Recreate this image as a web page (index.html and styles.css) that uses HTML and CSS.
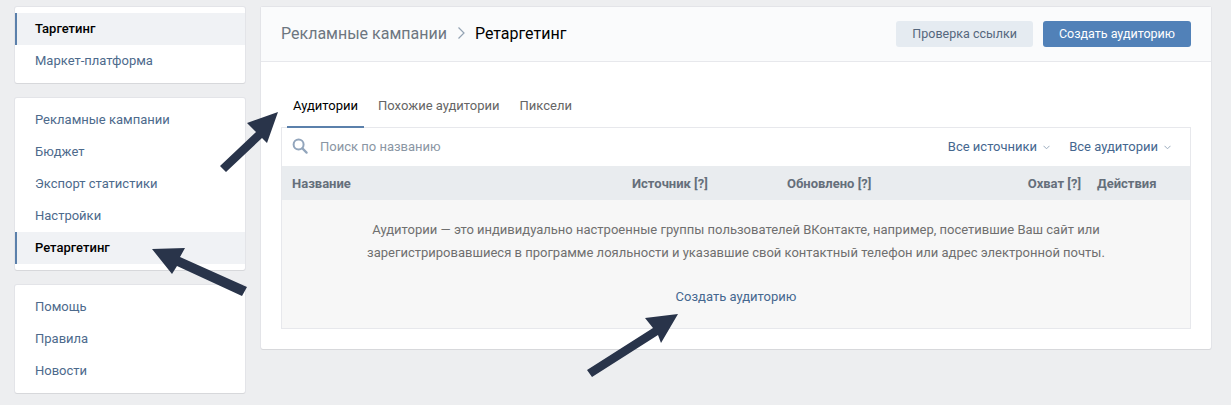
FILE: index.html
```html
<!DOCTYPE html>
<html lang="ru">
<head>
    <meta charset="UTF-8">
    <title>Ретаргетинг</title>
    <link rel="stylesheet" href="styles.css">
</head>
<body>
    <div class="page">
        <div class="sidebar">
            <div class="menu">
                <a class="menu-item active">Таргетинг</a>
                <a class="menu-item">Маркет-платформа</a>
            </div>
            <div class="menu">
                <a class="menu-item">Рекламные кампании</a>
                <a class="menu-item">Бюджет</a>
                <a class="menu-item">Экспорт статистики</a>
                <a class="menu-item">Настройки</a>
                <a class="menu-item active">Ретаргетинг</a>
            </div>
            <div class="menu">
                <a class="menu-item">Помощь</a>
                <a class="menu-item">Правила</a>
                <a class="menu-item">Новости</a>
            </div>
        </div>

        <div class="main">
            <div class="main-header">
                <div class="crumbs">
                    <span class="crumb">Рекламные кампании</span>
                    <svg class="crumb-sep" width="9" height="14" viewBox="0 0 9 14"><path d="M1.5 1.5 7 7l-5.5 5.5" fill="none" stroke="#93a3b3" stroke-width="1.2"/></svg>
                    <span class="crumb current">Ретаргетинг</span>
                </div>
                <div class="actions">
                    <button class="btn btn-light">Проверка ссылки</button>
                    <button class="btn btn-primary">Создать аудиторию</button>
                </div>
            </div>

            <div class="content">
                <div class="tabs">
                    <a class="tab selected">Аудитории</a>
                    <a class="tab">Похожие аудитории</a>
                    <a class="tab">Пиксели</a>
                </div>

                <div class="panel">
                    <div class="search-row">
                        <svg class="search-icon" width="16" height="16" viewBox="0 0 16 16"><circle cx="6.6" cy="6.6" r="5" fill="none" stroke="#92a5bc" stroke-width="2"/><path d="m10.4 10.4 4.2 4.2" stroke="#92a5bc" stroke-width="2.2" stroke-linecap="round"/></svg>
                        <span class="search-text">Поиск по названию</span>
                        <span class="filter">Все источники<svg width="7" height="5" viewBox="0 0 7 5"><path d="m.5.8 3 3 3-3" fill="none" stroke="#9aabbd"/></svg></span>
                        <span class="filter">Все аудитории<svg width="7" height="5" viewBox="0 0 7 5"><path d="m.5.8 3 3 3-3" fill="none" stroke="#9aabbd"/></svg></span>
                    </div>
                    <div class="table-head">
                        <span>Название</span>
                        <span>Источник [?]</span>
                        <span>Обновлено [?]</span>
                        <span class="right">Охват [?]</span>
                        <span>Действия</span>
                    </div>
                    <div class="empty">
                        <p>Аудитории — это индивидуально настроенные группы пользователей ВКонтакте, например, посетившие Ваш сайт или<br>зарегистрировавшиеся в программе лояльности и указавшие свой контактный телефон или адрес электронной почты.</p>
                        <a class="empty-link">Создать аудиторию</a>
                    </div>
                </div>
            </div>
        </div>
    </div>

    <!-- arrows drawn on top of the screenshot -->
    <svg class="arrows" width="1231" height="405" viewBox="0 0 1231 405">
        <polygon points="278,112 247,123 256,132 220,166 226,172 262,138 267,143" />
        <polygon points="152,249 185,248 180,257 247,287 242,296 177,266 172,274" />
        <polygon points="678,314 645,318 653,328 587,370 592,377 658,335 661,343" />
    </svg>
</body>
</html>
```

FILE: styles.css
```css
* {
    box-sizing: border-box;
}

body {
    margin: 0;
    background: #edeef0;
    font-family: Roboto, "Open Sans", sans-serif;
    font-size: 13px;
    color: #2a5885;
    height: 405px;
    overflow: hidden;
    position: relative;
}

.page {
    display: flex;
    align-items: flex-start;
    gap: 16px;
    padding: 7px 20px 0 15px;
}

/* left menu */
.sidebar {
    width: 230px;
    flex-shrink: 0;
    display: flex;
    flex-direction: column;
    gap: 15px;
}

.menu {
    background: #fff;
    border-radius: 2px;
    padding: 6px 0 6px;
    box-shadow: 0 1px 0 0 #d7d8db, 0 0 0 1px #e3e4e8;
}

.menu-item {
    display: block;
    height: 32px;
    line-height: 32px;
    padding-left: 20px;
    color: #4d6a8c;
}

.menu-item.active {
    padding-left: 18px;
    border-left: 2px solid #5b80ab;
    background: #f0f2f5;
    color: #000;
    font-weight: 500;
}

/* main card */
.main {
    width: 950px;
    height: 342px;
    background: #fff;
    border-radius: 2px;
    box-shadow: 0 1px 0 0 #d7d8db, 0 0 0 1px #e3e4e8;
}

.main-header {
    height: 55px;
    padding: 0 20px;
    background: #fafbfc;
    border-bottom: 1px solid #e7e8ec;
    display: flex;
    align-items: center;
    justify-content: space-between;
}

.crumbs {
    display: flex;
    align-items: center;
    padding-bottom: 2px;
}

.crumb {
    font-size: 16px;
    color: #6d7680;
}

.crumb.current {
    color: #000;
}

.crumb-sep {
    margin: 0 9px 0 10px;
}

.actions {
    display: flex;
    gap: 10px;
}

.btn {
    height: 26px;
    padding: 0 16px 1px;
    border: 0;
    border-radius: 3px;
    font-family: inherit;
    font-size: 12.5px;
}

.btn-light {
    background: #e5ebf1;
    color: #55677d;
}

.btn-primary {
    background: #5181b8;
    color: #fff;
}

.content {
    padding: 0 20px;
}

.tabs {
    display: flex;
    height: 66px;
    padding-left: 6px;
    align-items: flex-end;
}

.tab {
    height: 44px;
    padding: 0 6px;
    line-height: 44px;
    color: #656565;
    margin-right: 8px;
}

.tab.selected {
    color: #000;
    border-bottom: 2px solid #5b80ab;
    position: relative;
    z-index: 1;
}

.panel {
    height: 202px;
    margin-top: -1px;
    border: 1px solid #e7e8ec;
    display: flex;
    flex-direction: column;
}

.search-row {
    height: 38px;
    display: flex;
    align-items: center;
    padding: 0 19px 2px 10px;
    flex-shrink: 0;
}

.search-icon {
    margin-right: 12px;
}

.search-text {
    color: #8a96a3;
    flex: 1;
}

.filter {
    color: #45678f;
    margin-left: 19px;
}

.filter svg {
    margin-left: 6px;
    vertical-align: 1px;
}

.table-head {
    height: 34px;
    flex-shrink: 0;
    background: #e9ecef;
    padding: 0 33px 0 10px;
    display: grid;
    grid-template-columns: 340px 155px auto 1fr 60px;
    align-items: center;
    color: #656f7b;
    font-weight: 700;
}

.table-head .right {
    text-align: right;
    padding-right: 16px;
}

.empty {
    flex: 1;
    background: #f7f7f7;
    text-align: center;
    padding-top: 19px;
}

.empty p {
    margin: 0;
    line-height: 22.5px;
    color: #6f6f6f;
}

.empty-link {
    display: block;
    margin-top: 25px;
    line-height: 16px;
    color: #45678f;
}

.arrows {
    position: absolute;
    left: 0;
    top: 0;
    pointer-events: none;
    fill: #29344a;
}
```
